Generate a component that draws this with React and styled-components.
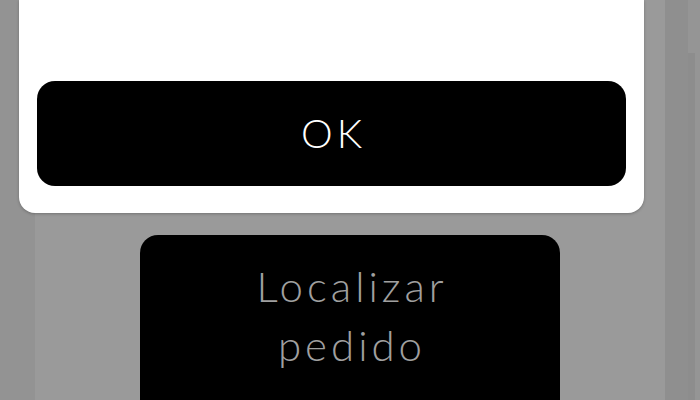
import React from "react";
import styled, { createGlobalStyle } from "styled-components";

const Global = createGlobalStyle`
  html, body { margin: 0; padding: 0; }
  body {
    width: 700px;
    height: 400px;
    overflow: hidden;
    background: #939393;
    font-family: "Lato", "Noto Sans", sans-serif;
  }
`;

const Screen = styled.div`
  position: relative;
  width: 700px;
  height: 400px;
  display: flex;
  overflow: hidden;
  background: #939393;
`;

const Gutter = styled.div`
  width: ${(p) => p.$w}px;
  flex: none;
  background: ${(p) => p.$bg};
  position: relative;
`;

const Page = styled.main`
  width: 630px;
  flex: none;
  background: #9a9a9a;
  box-shadow: -4px 0 5px rgba(0, 0, 0, 0.08);
  display: flex;
  flex-direction: column;
  align-items: flex-start;
  padding-top: 235px;
  padding-left: 105px;
  box-sizing: border-box;
`;

const ActionButton = styled.button`
  width: 420px;
  height: 190px;
  flex: none;
  border: none;
  border-radius: 18px;
  background: #000;
  color: #a0a0a0;
  font-family: "Lato", "Noto Sans", sans-serif;
  font-weight: 300;
  font-size: 42px;
  line-height: 59px;
  padding: 22px 0 0;
  display: flex;
  flex-direction: column;
  align-items: center;
  justify-content: flex-start;
  box-sizing: border-box;
`;

const Line = styled.span`
  letter-spacing: 4px;
  margin-right: -4px;
`;

const ScrollThumb = styled.div`
  position: absolute;
  left: 0;
  top: 53px;
  width: 7px;
  height: 347px;
  background: #8d8d8d;
`;

const Dialog = styled.div`
  position: absolute;
  left: 19px;
  top: 0;
  width: 625px;
  height: 213px;
  background: #fff;
  border-radius: 0 0 16px 16px;
  box-shadow: 0 1px 3px rgba(0, 0, 0, 0.25);
  padding: 81px 18px 0;
  box-sizing: border-box;
`;

const OkButton = styled.button`
  width: 589px;
  height: 105px;
  border: none;
  border-radius: 18px;
  background: #000;
  color: #fff;
  font-family: "Lato", "Noto Sans", sans-serif;
  font-weight: 300;
  font-size: 40px;
  display: flex;
  align-items: center;
  justify-content: center;
  padding: 0 0 2px;
`;

export default function App() {
  return (
    <>
      <Global />
      <Screen>
        <Gutter $w={35} $bg="#939393" />
        <Page>
          <ActionButton>
            <Line>Localizar</Line>
            <Line>pedido</Line>
          </ActionButton>
        </Page>
        <Gutter $w={23} $bg="#8f8f8f" />
        <Gutter $w={12} $bg="#959595">
          <ScrollThumb />
        </Gutter>
        <Dialog>
          <OkButton>
            <Line>OK</Line>
          </OkButton>
        </Dialog>
      </Screen>
    </>
  );
}
